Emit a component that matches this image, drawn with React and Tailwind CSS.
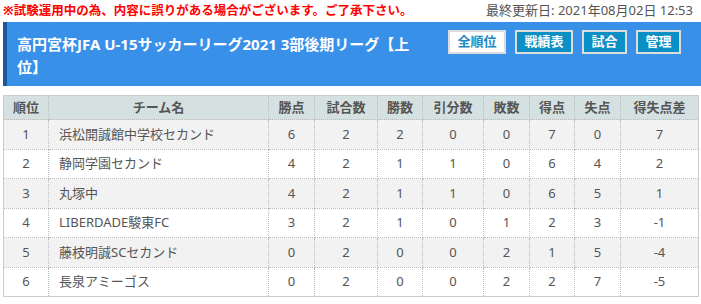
import React from 'react';

const rows = [
  { rank: 1, team: '浜松開誠館中学校セカンド', pts: 6, games: 2, win: 2, draw: 0, lose: 0, gf: 7, ga: 0, diff: 7 },
  { rank: 2, team: '静岡学園セカンド', pts: 4, games: 2, win: 1, draw: 1, lose: 0, gf: 6, ga: 4, diff: 2 },
  { rank: 3, team: '丸塚中', pts: 4, games: 2, win: 1, draw: 1, lose: 0, gf: 6, ga: 5, diff: 1 },
  { rank: 4, team: 'LIBERDADE駿東FC', pts: 3, games: 2, win: 1, draw: 0, lose: 1, gf: 2, ga: 3, diff: -1 },
  { rank: 5, team: '藤枝明誠SCセカンド', pts: 0, games: 2, win: 0, draw: 0, lose: 2, gf: 1, ga: 5, diff: -4 },
  { rank: 6, team: '長泉アミーゴス', pts: 0, games: 2, win: 0, draw: 0, lose: 2, gf: 2, ga: 7, diff: -5 },
];

const headers = ['順位', 'チーム名', '勝点', '試合数', '勝数', '引分数', '敗数', '得点', '失点', '得失点差'];
const widths = ['w-[45px]', 'w-[220px]', 'w-[46px]', 'w-[63px]', 'w-[45px]', 'w-[61px]', 'w-[46px]', 'w-[45px]', 'w-[46px]', 'w-[78px]'];

const cell = 'border border-dotted border-[#bbb] text-center';

const App = () => {
  return (
    <div className="w-[701px] h-[304px] overflow-hidden bg-white font-['Noto_Sans','Noto_Sans_CJK_JP',sans-serif] text-[#555]">
      {/* notice bar */}
      <div className="flex h-[22px] items-center justify-between pl-[3px] pr-[8px]">
        <p className="text-[12.5px] font-bold text-[#ff0000]">
          ※試験運用中の為、内容に誤りがある場合がございます。ご了承下さい。
        </p>
        <p className="text-[13px] text-[#555]">最終更新日: 2021年08月02日 12:53</p>
      </div>

      {/* title header */}
      <div className="ml-[3px] flex h-[64px] items-start justify-between border-l-4 border-[#1a5a9c] bg-[#3990e9] pl-[10px] pr-[20px]">
        <h1 className="mt-[11px] w-[400px] text-[15px] font-bold leading-[23px] text-white">
          高円宮杯JFA U-15サッカーリーグ2021 3部後期リーグ【上位】
        </h1>
        <div className="mt-[8px] flex gap-[9px] text-[13px] font-bold">
          <button className="h-[24px] w-[58px] border-2 border-[#dcdcdc] bg-white text-[#1b88c4]">全順位</button>
          <button className="h-[24px] w-[58px] border-2 border-[#dcdcdc] bg-[#0b8fc5] text-white">戦績表</button>
          <button className="h-[24px] w-[45px] border-2 border-[#dcdcdc] bg-[#0b8fc5] text-white">試合</button>
          <button className="h-[24px] w-[45px] border-2 border-[#dcdcdc] bg-[#0b8fc5] text-white">管理</button>
        </div>
      </div>

      {/* standings */}
      <table className="ml-[3px] mt-[9px] w-[695px] table-fixed border-collapse border border-solid border-[#ccc] text-[13px]">
        <colgroup>
          {widths.map((w, i) => (
            <col key={i} className={w} />
          ))}
        </colgroup>
        <thead>
          <tr className="h-[24px] bg-[#d5e1e1]">
            {headers.map((h) => (
              <th key={h} className={`${cell} font-bold`}>
                {h}
              </th>
            ))}
          </tr>
        </thead>
        <tbody>
          {rows.map((r, i) => (
            <tr key={r.rank} className={`h-[29.5px] ${i % 2 === 0 ? 'bg-[#f2f2f2]' : 'bg-white'}`}>
              <td className={cell}>{r.rank}</td>
              <td className={`${cell} !text-left pl-[10px]`}>{r.team}</td>
              <td className={cell}>{r.pts}</td>
              <td className={cell}>{r.games}</td>
              <td className={cell}>{r.win}</td>
              <td className={cell}>{r.draw}</td>
              <td className={cell}>{r.lose}</td>
              <td className={cell}>{r.gf}</td>
              <td className={cell}>{r.ga}</td>
              <td className={cell}>{r.diff}</td>
            </tr>
          ))}
        </tbody>
      </table>
    </div>
  );
};

export default App;
